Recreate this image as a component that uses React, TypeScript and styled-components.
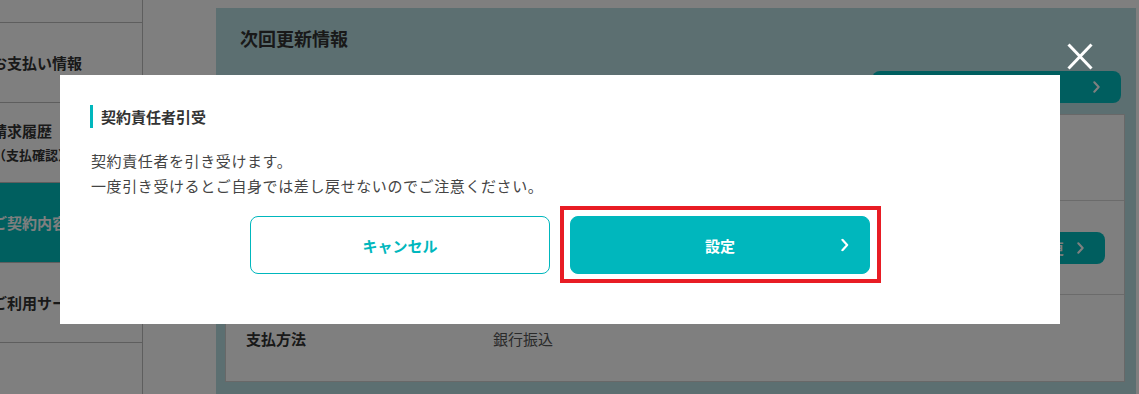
import React from "react";
import styled, { createGlobalStyle } from "styled-components";

const GlobalStyle = createGlobalStyle`
  html, body {
    margin: 0;
    padding: 0;
    background: #ffffff;
    overflow: hidden;
  }
  body {
    font-family: "Noto Sans CJK JP", "Noto Sans", sans-serif;
    color: #333;
  }
  * { box-sizing: border-box; }
`;

const TEAL = "#00b7bd";

const Page = styled.div`
  display: flex;
  width: 100%;
  height: 100vh;
  overflow: hidden;
`;

const Sidebar = styled.nav`
  flex: 0 0 163px;
  margin-left: -20px;
  margin-top: -57px;
  border-right: 1px solid #bcbcbc;
  display: flex;
  flex-direction: column;
  height: calc(100vh + 57px);
`;

const NavItem = styled.div<{ $active?: boolean }>`
  height: 80px;
  flex: 0 0 80px;
  display: flex;
  flex-direction: column;
  justify-content: center;
  padding-left: 12px;
  border-bottom: 1px solid #bcbcbc;
  background: ${(p) => (p.$active ? "#00bebe" : "transparent")};
  color: ${(p) => (p.$active ? "#ffffff" : "#333333")};
  font-size: 15px;
  font-weight: 700;
  line-height: 24px;
  white-space: nowrap;
`;

const NavSub = styled.span`
  font-size: 13px;
  margin-left: 1px;
`;

const Main = styled.main`
  flex: 1;
  padding: 8px 3px 0 73px;
`;

const Panel = styled.section`
  background: #b8dee2;
  height: 100%;
  padding: 18px 11px 14px 9px;
  display: flex;
  flex-direction: column;
`;

const PanelTitle = styled.h2`
  margin: 0 0 0 15px;
  font-size: 18px;
  line-height: 24px;
  font-weight: 700;
  color: #333;
`;

const PanelActions = styled.div`
  display: flex;
  justify-content: flex-end;
  margin-top: 21px;
  padding-right: 4px;
`;

const DarkButton = styled.button<{ $width: number; $gap: number }>`
  width: ${(p) => p.$width}px;
  height: 32px;
  border: none;
  border-radius: 8px;
  background: #00bcbe;
  color: #ffffff;
  font-family: inherit;
  font-size: 14px;
  font-weight: 700;
  display: flex;
  align-items: center;
  justify-content: flex-end;
  gap: ${(p) => p.$gap}px;
  padding: 0 21px 0 0;
`;

const Card = styled.div`
  margin-top: 11px;
  background: #ffffff;
  border: 1px solid #d0d0d0;
  display: flex;
  flex-direction: column;
`;

const CardRow = styled.div<{ $height: number; $last?: boolean }>`
  height: ${(p) => p.$height}px;
  display: grid;
  grid-template-columns: 247px 1fr auto;
  align-items: center;
  padding: 0 19px 0 20px;
  border-bottom: ${(p) => (p.$last ? "none" : "1px solid #d6d6d6")};
`;

const RowLabel = styled.div`
  font-size: 15px;
  font-weight: 700;
  color: #333;
`;

const RowValue = styled.div`
  font-size: 15px;
  color: #555;
`;

const Overlay = styled.div`
  position: fixed;
  inset: 0;
  background: rgba(0, 0, 0, 0.5);
  z-index: 10;
`;

const ModalLayer = styled.div`
  position: fixed;
  inset: 0;
  z-index: 20;
  padding: 75px 0 0 60px;
`;

const Modal = styled.div`
  position: relative;
  width: 1000px;
  background: #ffffff;
  padding: 30px 30px 50px;
`;

const CloseButton = styled.button`
  position: absolute;
  top: -32px;
  right: -33px;
  width: 26px;
  height: 27px;
  padding: 0;
  border: none;
  background: transparent;
  display: flex;
`;

const ModalHeading = styled.h3`
  margin: 0;
  border-left: 3px solid ${TEAL};
  padding-left: 8px;
  height: 23px;
  font-size: 15px;
  line-height: 23px;
  font-weight: 700;
  color: #333;
`;

const ModalBody = styled.p`
  margin: 20px 0 0 1px;
  font-size: 15px;
  line-height: 25px;
  letter-spacing: 0.04em;
  color: #444;
`;

const ButtonRow = styled.div`
  margin-top: 18px;
  display: flex;
  justify-content: center;
  gap: 20px;
`;

const ModalButton = styled.button<{ $primary?: boolean }>`
  position: relative;
  width: 300px;
  height: 58px;
  border-radius: 8px;
  border: 1px solid ${TEAL};
  background: ${(p) => (p.$primary ? TEAL : "#ffffff")};
  color: ${(p) => (p.$primary ? "#ffffff" : TEAL)};
  font-family: inherit;
  font-size: 15px;
  font-weight: 700;
  display: flex;
  align-items: center;
  justify-content: center;
  padding: 0;
`;

const ButtonChevron = styled.span`
  position: absolute;
  right: 20px;
  top: 50%;
  transform: translateY(-50%);
  display: flex;
`;

const Highlight = styled.div`
  position: relative;
  display: flex;
  &::after {
    content: "";
    position: absolute;
    inset: -10px -11px -9px -10px;
    border: 4px solid #e81c24;
    pointer-events: none;
  }
`;

const Chevron = ({ size = 12 }: { size?: number }) => (
  <svg width={size * 0.6} height={size} viewBox="0 0 7 12" fill="none">
    <polyline points="1.2,1.2 5.6,6 1.2,10.8" stroke="#ffffff" strokeWidth="2" strokeLinecap="round" strokeLinejoin="round" />
  </svg>
);

export default function App() {
  return (
    <>
      <GlobalStyle />
      <Page>
        <Sidebar>
          <NavItem>ご契約者情報</NavItem>
          <NavItem>お支払い情報</NavItem>
          <NavItem>
            請求履歴
            <NavSub>（支払確認）</NavSub>
          </NavItem>
          <NavItem $active>ご契約内容</NavItem>
          <NavItem>ご利用サービス</NavItem>
        </Sidebar>
        <Main>
          <Panel>
            <PanelTitle>次回更新情報</PanelTitle>
            <PanelActions>
              <DarkButton $width={249} $gap={60}>
                更新する
                <Chevron />
              </DarkButton>
            </PanelActions>
            <Card>
              <CardRow $height={86}>
                <RowLabel>次回更新日</RowLabel>
                <RowValue>2025年4月1日</RowValue>
                <span />
              </CardRow>
              <CardRow $height={94}>
                <RowLabel>契約責任者</RowLabel>
                <RowValue>山田 太郎</RowValue>
                <DarkButton $width={190} $gap={13}>
                  変更
                  <Chevron />
                </DarkButton>
              </CardRow>
              <CardRow $height={86} $last>
                <RowLabel>支払方法</RowLabel>
                <RowValue>銀行振込</RowValue>
                <span />
              </CardRow>
            </Card>
          </Panel>
        </Main>
      </Page>
      <Overlay />
      <ModalLayer>
        <Modal role="dialog" aria-label="契約責任者引受">
          <CloseButton aria-label="閉じる">
            <svg width="26" height="27" viewBox="0 0 26 27" fill="none">
              <line x1="1.5" y1="1.5" x2="24.5" y2="25.5" stroke="#ffffff" strokeWidth="3" />
              <line x1="24.5" y1="1.5" x2="1.5" y2="25.5" stroke="#ffffff" strokeWidth="3" />
            </svg>
          </CloseButton>
          <ModalHeading>契約責任者引受</ModalHeading>
          <ModalBody>
            契約責任者を引き受けます。
            <br />
            一度引き受けるとご自身では差し戻せないのでご注意ください。
          </ModalBody>
          <ButtonRow>
            <ModalButton>キャンセル</ModalButton>
            <Highlight>
              <ModalButton $primary>
                設定
                <ButtonChevron>
                  <Chevron size={13} />
                </ButtonChevron>
              </ModalButton>
            </Highlight>
          </ButtonRow>
        </Modal>
      </ModalLayer>
    </>
  );
}
